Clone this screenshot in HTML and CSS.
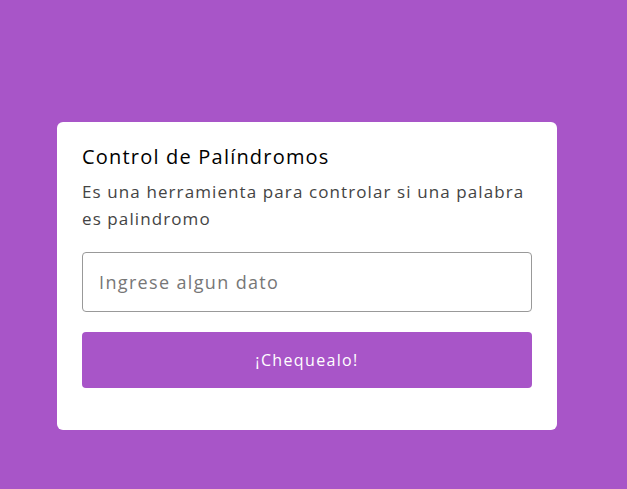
FILE: index.html
```html
<!DOCTYPE html>
<html lang="es">
<head>
<meta charset="utf-8">
<link rel="stylesheet" href="styles.css">
</head>
<body>
<div class="page">
  <div class="card">
    <h1 class="title">Control de Palíndromos</h1>
    <p class="desc">Es una herramienta para controlar si una palabra es palindromo</p>
    <input class="field" type="text" placeholder="Ingrese algun dato">
    <button class="btn">¡Chequealo!</button>
  </div>
</div>
</body>
</html>
```
FILE: styles.css
```css
html, body {
  margin: 0;
  padding: 0;
  background: #a855c8;
  height: 100%;
}
body {
  font-family: "Open Sans", "DejaVu Sans", sans-serif;
}
.page {
  padding: 122px 0 0 57px;
}
.card {
  width: 500px;
  box-sizing: border-box;
  background: #fff;
  border-radius: 6px;
  padding: 20px 25px 42px;
  display: flex;
  flex-direction: column;
}
.title {
  margin: 0;
  font-size: 20px;
  font-weight: 400;
  line-height: 30px;
  letter-spacing: 1.2px;
  color: #000;
}
.desc {
  margin: 6px 0 0;
  font-size: 17px;
  line-height: 27px;
  letter-spacing: 1.1px;
  color: #444;
}
.field {
  margin-top: 20px;
  height: 60px;
  box-sizing: border-box;
  border: 1px solid #999;
  border-radius: 4px;
  padding: 0 16px;
  font-family: inherit;
  font-size: 18px;
  letter-spacing: 1.35px;
  color: #333;
  outline: none;
}
.field::placeholder {
  color: #777;
}
.btn {
  margin-top: 20px;
  height: 56px;
  border: none;
  border-radius: 4px;
  background: #a855c8;
  color: #fff;
  font-family: inherit;
  font-size: 16px;
  letter-spacing: 1.35px;
}
```
